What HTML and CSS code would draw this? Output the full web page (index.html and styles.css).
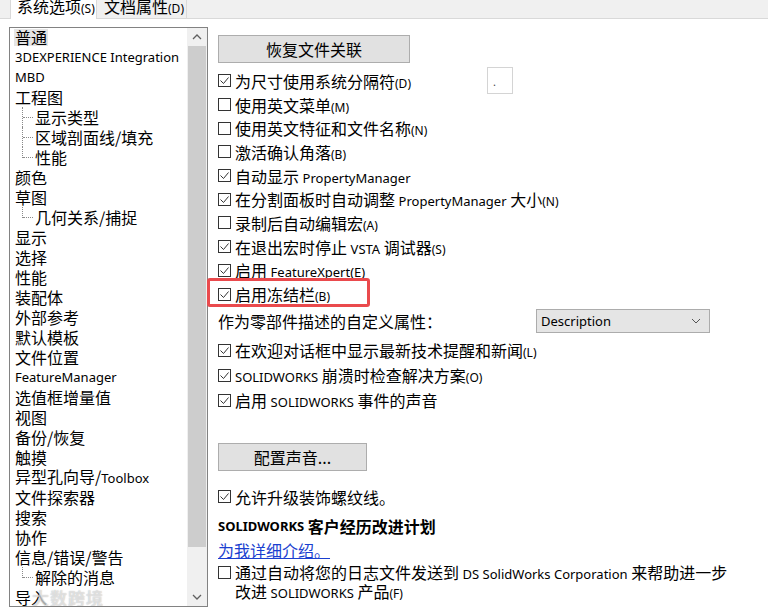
FILE: index.html
```html
<!DOCTYPE html>
<html lang="zh-CN">
<head>
    <meta charset="UTF-8">
    <title>系统选项 - 普通</title>
    <link rel="stylesheet" href="styles.css">
</head>
<body>
<div class="tabs">
    <div class="tab active">系统选项<span class="k">(S)</span></div>
    <div class="tab">文档属性<span class="k">(D)</span></div>
</div>
<div class="page">
    <!-- 左侧选项树 -->
    <div class="tree">
        <ul class="items">
            <li class="sel"><span>普通</span></li>
            <li><span class="en">3DEXPERIENCE Integration</span></li>
            <li><span class="en">MBD</span></li>
            <li><span>工程图</span></li>
            <li class="sub"><i class="branch"><i></i></i><span>显示类型</span></li>
            <li class="sub"><i class="branch"><i></i></i><span>区域剖面线/填充</span></li>
            <li class="sub"><i class="branch last"><i></i></i><span>性能</span></li>
            <li><span>颜色</span></li>
            <li><span>草图</span></li>
            <li class="sub"><i class="branch last"><i></i></i><span>几何关系/捕捉</span></li>
            <li><span>显示</span></li>
            <li><span>选择</span></li>
            <li><span>性能</span></li>
            <li><span>装配体</span></li>
            <li><span>外部参考</span></li>
            <li><span>默认模板</span></li>
            <li><span>文件位置</span></li>
            <li><span class="en">FeatureManager</span></li>
            <li><span>选值框增量值</span></li>
            <li><span>视图</span></li>
            <li><span>备份/恢复</span></li>
            <li><span>触摸</span></li>
            <li><span>异型孔向导/<span class="en">Toolbox</span></span></li>
            <li><span>文件探索器</span></li>
            <li><span>搜索</span></li>
            <li><span>协作</span></li>
            <li><span>信息/错误/警告</span></li>
            <li class="sub"><i class="branch last"><i></i></i><span>解除的消息</span></li>
            <li><span>导入</span></li>
        </ul>
        <div class="scroll">
            <div class="arrow">
                <svg width="10" height="6" viewBox="0 0 10 6"><polyline points="1,5 5,1 9,5" fill="none" stroke="#606060" stroke-width="1.3"/></svg>
            </div>
            <div class="thumb"></div>
            <div class="track"></div>
            <div class="arrow">
                <svg width="10" height="6" viewBox="0 0 10 6"><polyline points="1,1 5,5 9,1" fill="none" stroke="#606060" stroke-width="1.3"/></svg>
            </div>
        </div>
        <div class="watermark">大数跨境</div>
    </div>

    <!-- 右侧选项 -->
    <div class="options">
        <div class="btn btn-wide">恢复文件关联</div>

        <div class="group">
            <div class="row">
                <span class="cb on"><svg width="11" height="11" viewBox="0 0 11 11"><polyline points="1.5,5.5 4.5,8.5 9.5,2.5" fill="none" stroke="#333" stroke-width="1"/></svg></span>
                <span class="label label-sep">为尺寸使用系统分隔符<span class="k">(D)</span></span>
                <span class="sep">.</span>
            </div>
            <div class="row">
                <span class="cb"></span>
                <span class="label">使用英文菜单<span class="k">(M)</span></span>
            </div>
            <div class="row">
                <span class="cb"></span>
                <span class="label">使用英文特征和文件名称<span class="k">(N)</span></span>
            </div>
            <div class="row">
                <span class="cb"></span>
                <span class="label">激活确认角落<span class="k">(B)</span></span>
            </div>
            <div class="row">
                <span class="cb on"><svg width="11" height="11" viewBox="0 0 11 11"><polyline points="1.5,5.5 4.5,8.5 9.5,2.5" fill="none" stroke="#333" stroke-width="1"/></svg></span>
                <span class="label">自动显示 <span class="en">PropertyManager</span></span>
            </div>
            <div class="row">
                <span class="cb on"><svg width="11" height="11" viewBox="0 0 11 11"><polyline points="1.5,5.5 4.5,8.5 9.5,2.5" fill="none" stroke="#333" stroke-width="1"/></svg></span>
                <span class="label">在分割面板时自动调整 <span class="en">PropertyManager</span> 大小<span class="k">(N)</span></span>
            </div>
            <div class="row">
                <span class="cb"></span>
                <span class="label">录制后自动编辑宏<span class="k">(A)</span></span>
            </div>
            <div class="row">
                <span class="cb on"><svg width="11" height="11" viewBox="0 0 11 11"><polyline points="1.5,5.5 4.5,8.5 9.5,2.5" fill="none" stroke="#333" stroke-width="1"/></svg></span>
                <span class="label">在退出宏时停止 <span class="en">VSTA</span> 调试器<span class="k">(S)</span></span>
            </div>
            <div class="row">
                <span class="cb on"><svg width="11" height="11" viewBox="0 0 11 11"><polyline points="1.5,5.5 4.5,8.5 9.5,2.5" fill="none" stroke="#333" stroke-width="1"/></svg></span>
                <span class="label">启用 <span class="en">FeatureXpert(E)</span></span>
            </div>
            <div class="row">
                <span class="cb on"><svg width="11" height="11" viewBox="0 0 11 11"><polyline points="1.5,5.5 4.5,8.5 9.5,2.5" fill="none" stroke="#333" stroke-width="1"/></svg></span>
                <span class="label">启用冻结栏<span class="k">(B)</span></span>
                <span class="mark"></span>
            </div>
        </div>

        <div class="row row-prop">
            <span class="label label-prop">作为零部件描述的自定义属性：</span>
            <div class="select">
                <span class="en">Description</span>
                <svg width="10" height="6" viewBox="0 0 10 6"><polyline points="1,1 5,5 9,1" fill="none" stroke="#555" stroke-width="1"/></svg>
            </div>
        </div>

        <div class="group group-b">
            <div class="row">
                <span class="cb on"><svg width="11" height="11" viewBox="0 0 11 11"><polyline points="1.5,5.5 4.5,8.5 9.5,2.5" fill="none" stroke="#333" stroke-width="1"/></svg></span>
                <span class="label">在欢迎对话框中显示最新技术提醒和新闻<span class="k">(L)</span></span>
            </div>
            <div class="row">
                <span class="cb on"><svg width="11" height="11" viewBox="0 0 11 11"><polyline points="1.5,5.5 4.5,8.5 9.5,2.5" fill="none" stroke="#333" stroke-width="1"/></svg></span>
                <span class="label"><span class="en">SOLIDWORKS</span> 崩溃时检查解决方案<span class="k">(O)</span></span>
            </div>
            <div class="row">
                <span class="cb on"><svg width="11" height="11" viewBox="0 0 11 11"><polyline points="1.5,5.5 4.5,8.5 9.5,2.5" fill="none" stroke="#333" stroke-width="1"/></svg></span>
                <span class="label">启用 <span class="en">SOLIDWORKS</span> 事件的声音</span>
            </div>
        </div>

        <div class="btn btn-sound">配置声音...</div>

        <div class="row row-thread">
            <span class="cb on"><svg width="11" height="11" viewBox="0 0 11 11"><polyline points="1.5,5.5 4.5,8.5 9.5,2.5" fill="none" stroke="#333" stroke-width="1"/></svg></span>
            <span class="label">允许升级装饰螺纹线。</span>
        </div>

        <div class="row heading"><span class="en">SOLIDWORKS</span>&nbsp;客户经历改进计划</div>
        <div class="row"><a href="#" class="link">为我详细介绍。</a></div>

        <div class="row row-multi">
            <span class="cb"></span>
            <span class="label">通过自动将您的日志文件发送到 <span class="en">DS SolidWorks Corporation</span> 来帮助进一步<br>改进 <span class="en">SOLIDWORKS</span> 产品<span class="k">(F)</span></span>
        </div>
    </div>
</div>
</body>
</html>
```

FILE: styles.css
```css
* {
    margin: 0;
    padding: 0;
    box-sizing: border-box;
}
body {
    width: 768px;
    height: 611px;
    overflow: hidden;
    background: #fff;
    color: #000;
    font-family: "Noto Sans CJK SC", "Noto Sans", sans-serif;
    font-size: 16px;
}
.en {
    font-family: "Noto Sans", "Noto Sans CJK SC", sans-serif;
    font-size: 13px;
}
.k {
    font-family: "Noto Sans", sans-serif;
    font-size: 12px;
}

/* 顶部标签页 */
.tabs {
    display: flex;
    height: 19px;
    padding-left: 10px;
    background: #f0f0f0;
    border-bottom: 1px solid #d9d9d9;
}
.tab {
    height: 18px;
    padding-left: 7px;
    line-height: 12px;
    border-right: 1px solid #d9d9d9;
    white-space: nowrap;
}
.tab.active {
    width: 87px;
    height: 19px;
    padding-left: 6px;
    background: #fff;
    border-left: 1px solid #d9d9d9;
}
.tab + .tab {
    width: 90px;
}

.page {
    display: flex;
    padding: 8px 0 0 9px;
}

/* 左侧树 */
.tree {
    position: relative;
    display: flex;
    flex: none;
    width: 199px;
    height: 580px;
    border: 1px solid #828282;
    overflow: hidden;
}
.items {
    flex: 1;
    list-style: none;
    margin-top: -1px;
    padding-left: 4px;
}
.items li {
    display: flex;
    align-items: center;
    height: 20px;
    line-height: 20px;
    white-space: nowrap;
}
.items li > span {
    padding: 0 1px;
}
.items li.sel > span {
    height: 17px;
    line-height: 17px;
    background: #e5e5e5;
}
.items li.sub {
    padding-left: 8px;
}
.branch {
    display: block;
    width: 11px;
    height: 20px;
    margin-right: 1px;
    border-left: 1px dotted #8a8a8a;
    align-self: flex-start;
}
.branch i {
    display: block;
    height: 11px;
    border-bottom: 1px dotted #8a8a8a;
}
.branch.last {
    height: 11px;
}
.scroll {
    display: flex;
    flex-direction: column;
    flex: none;
    width: 20px;
    background: #f0f0f0;
}
.arrow {
    display: flex;
    align-items: center;
    justify-content: center;
    height: 18px;
}
.thumb {
    height: 501px;
    margin: 0 1px;
    background: #cdcdcd;
}
.track {
    flex: 1;
}
.watermark {
    position: absolute;
    left: 22px;
    bottom: -2px;
    font-size: 17px;
    font-weight: 700;
    line-height: 20px;
    color: rgba(255, 255, 255, 0.55);
    text-shadow: 0 0 1px rgba(120, 120, 120, 0.55);
    letter-spacing: 1px;
}

/* 右侧选项 */
.options {
    flex: 1;
    padding: 8px 0 0 10px;
}
.btn {
    height: 28px;
    line-height: 26px;
    text-align: center;
    background: #e1e1e1;
    border: 1px solid #adadad;
}
.btn-wide {
    width: 192px;
}
.btn-sound {
    width: 149px;
    margin-top: 30px;
}
.group {
    margin-top: 6px;
}
.row {
    position: relative;
    display: flex;
    align-items: center;
    height: 23.7px;
    white-space: nowrap;
}
.cb {
    display: flex;
    align-items: center;
    justify-content: center;
    flex: none;
    width: 13px;
    height: 13px;
    margin-right: 4px;
    background: #fff;
    border: 1px solid #333;
}
.label-sep {
    width: 252px;
}
.sep {
    width: 26px;
    height: 27px;
    padding: 8px 0 0 5px;
    font-family: "Noto Sans", sans-serif;
    font-size: 11px;
    line-height: 11px;
    color: #444;
    border: 1px solid #d4d4d4;
}
.mark {
    position: absolute;
    left: -11px;
    top: -4px;
    width: 163px;
    height: 29px;
    border: 3px solid #ea4a4d;
    border-radius: 3px;
}
.row-prop {
    height: 24px;
    margin-top: 3px;
}
.label-prop {
    width: 318px;
}
.select {
    display: flex;
    align-items: center;
    justify-content: space-between;
    width: 174px;
    height: 24px;
    padding: 0 8px 0 4px;
    background: #e5e5e5;
    border: 1px solid #acacac;
}
.group-b {
    margin-top: 5px;
}
.group-b .row {
    height: 25px;
}
.row-thread {
    height: 24px;
    margin-top: 14px;
}
.heading {
    height: 24px;
    margin-top: 5px;
    font-weight: 700;
}
.heading .en {
    font-weight: 700;
}
.link {
    color: #1a3fd0;
    text-decoration: underline;
}
.row-multi {
    align-items: flex-start;
    height: auto;
    margin-top: 2px;
    line-height: 17px;
}
.row-multi .cb {
    margin-top: 2px;
}
```
